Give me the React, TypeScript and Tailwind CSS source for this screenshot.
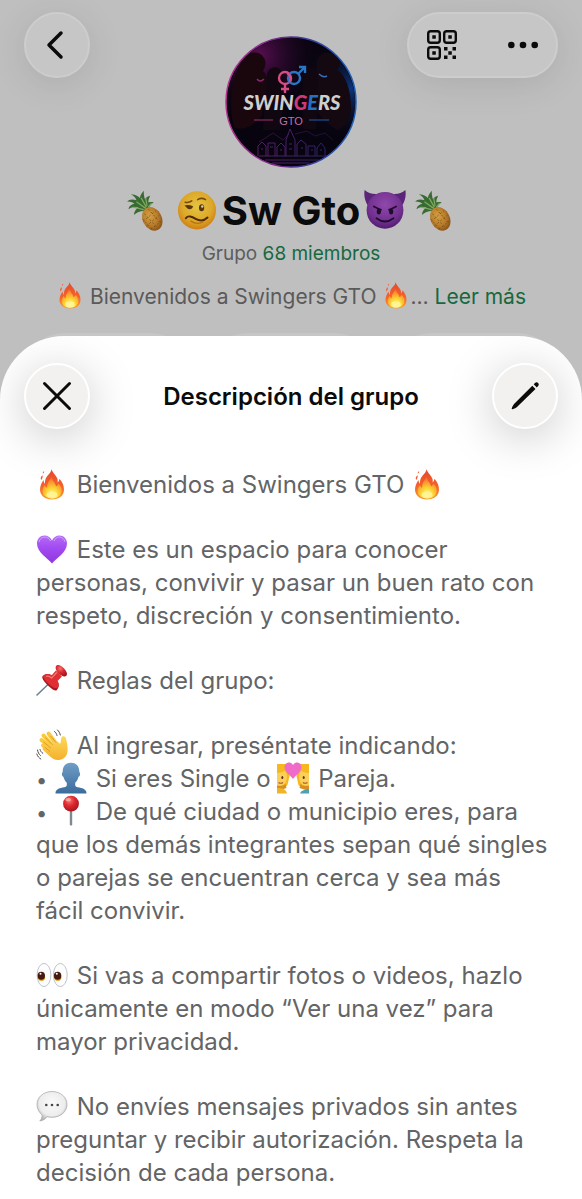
import React from 'react';

interface EmojiProps {
  label: string;
  className: string;
  children: React.ReactNode;
}

const Emoji: React.FC<EmojiProps> = ({ label, className, children }) => (
  <svg viewBox="0 0 32 32" role="img" aria-label={label} className={`inline-block shrink-0 ${className}`}>
    {children}
  </svg>
);

const inlineSize = 'w-8 h-8 -my-1 mr-0.5 align-[-3px]';
const titleSize = 'w-[42px] h-[42px]';
const subtitleSize = 'w-7 h-7 -my-1 align-[-1px]';

// Gradients shared by all the emoji drawings
const EmojiDefs = () => (
  <svg className="absolute w-0 h-0" aria-hidden="true">
    <defs>
      <linearGradient id="fireOuter" x1="0" y1="0" x2="0" y2="1">
        <stop offset="0" stopColor="#e5482d" />
        <stop offset="0.55" stopColor="#f4622b" />
        <stop offset="1" stopColor="#fb9a2c" />
      </linearGradient>
      <radialGradient id="fireInner" cx="0.5" cy="0.85" r="0.8">
        <stop offset="0" stopColor="#fff9b0" />
        <stop offset="0.4" stopColor="#fdd835" />
        <stop offset="1" stopColor="#f7702a" />
      </radialGradient>
      <linearGradient id="heart" x1="0" y1="0" x2="0" y2="1">
        <stop offset="0" stopColor="#b56cf5" />
        <stop offset="0.4" stopColor="#a44df2" />
        <stop offset="1" stopColor="#8f35e0" />
      </linearGradient>
      <radialGradient id="redBall" cx="0.4" cy="0.3" r="0.75">
        <stop offset="0" stopColor="#f7736f" />
        <stop offset="0.45" stopColor="#dc2a30" />
        <stop offset="1" stopColor="#a3131d" />
      </radialGradient>
      <linearGradient id="skin" x1="0" y1="0" x2="0" y2="1">
        <stop offset="0" stopColor="#fdd95a" />
        <stop offset="1" stopColor="#f4b02c" />
      </linearGradient>
      <linearGradient id="bust" x1="0" y1="0" x2="0" y2="1">
        <stop offset="0" stopColor="#6f9dc6" />
        <stop offset="1" stopColor="#3a6c9c" />
      </linearGradient>
      <radialGradient id="bubble" cx="0.5" cy="0.4" r="0.6">
        <stop offset="0" stopColor="#fafafa" />
        <stop offset="0.7" stopColor="#ededed" />
        <stop offset="1" stopColor="#b5b5b5" />
      </radialGradient>
      <radialGradient id="woozy" cx="0.5" cy="0.4" r="0.6">
        <stop offset="0" stopColor="#e3c540" />
        <stop offset="0.65" stopColor="#dda82a" />
        <stop offset="1" stopColor="#cf7f12" />
      </radialGradient>
      <radialGradient id="devil" cx="0.5" cy="0.35" r="0.65">
        <stop offset="0" stopColor="#8f49ab" />
        <stop offset="0.7" stopColor="#71308f" />
        <stop offset="1" stopColor="#531c72" />
      </radialGradient>
      <radialGradient id="pineapple" cx="0.45" cy="0.35" r="0.7">
        <stop offset="0" stopColor="#d3a044" />
        <stop offset="0.6" stopColor="#b67a2a" />
        <stop offset="1" stopColor="#7f4c14" />
      </radialGradient>
    </defs>
  </svg>
);

const Fire = ({ className = inlineSize }: { className?: string }) => (
  <Emoji label="fuego" className={className}>
    <path fill="url(#fireOuter)" d="M15.500 1c.6 3.600 5 6.500 6 10 .3 1 .4 2.300.1 3.500.9-.8 1.700-2 1.900-3.800 2.800 3.300 4.500 6.700 4.500 10.800 0 6.300-5 10-12 10S4 27.500 4 21.500c0-3.600 1.500-6.500 3.500-9.500.2 1.600.6 3 1.500 3.700C8.800 11 10.500 8.500 13 6c1.300-1.400 2.300-3 2.500-5z" />
    <path fill="#ee5a3a" d="M5.200 12c-1-1.600-.4-3.800 1.400-4.800.3 1.900-.2 3.400-1.400 4.800zM6.800 5.500c-.3-1 .4-2 1.400-2.300 0 1.100-.5 1.900-1.400 2.300z" />
    <path fill="url(#fireInner)" d="M15.800 9c.2 4 3.800 5.500 4.200 9.500 1-.4 2-1.500 2.500-2.700 2.200 2.400 3.500 4.700 3.200 7.400-.3 4.500-4 7.300-9.500 7.300s-9.400-2.600-9.700-6.900c-.1-2.400 1-4.700 2.400-6.600.4 1.300 1 2.200 2.200 2.700-.2-4.600 2.500-7.400 4.700-10.700z" />
    <ellipse cx="16" cy="26.800" rx="5.500" ry="3.600" fill="#fff59a" opacity="0.8" />
  </Emoji>
);

const PurpleHeart = () => (
  <Emoji label="corazón morado" className={inlineSize}>
    <path fill="url(#heart)" d="M16 30.500C12 25.500 1 19.500 1 10.500 1 5.800 4.300 2.500 8.500 2.500c3.400 0 6.200 2 7.500 5 1.300-3 4.100-5 7.500-5 4.200 0 7.500 3.300 7.500 8 0 9-11 15-15 20z" />
    <path d="M3 9c.6-3 3-5 5.600-5 2.600 0 4.800 1.500 6 4M18 8c1-2.500 3-4 5.400-4 2.600 0 4.800 2 5.500 4.600" fill="none" stroke="#d3a5fa" strokeWidth="1" />
  </Emoji>
);

const Pushpin = () => (
  <Emoji label="chincheta" className={inlineSize}>
    <path d="M13 19.500L1 31" stroke="#6e8193" strokeWidth="1.600" strokeLinecap="round" />
    <path fill="#a9171f" d="M6.500 12.300c3-3 6-3 9-1l5.500 5.500c2.600 3.500 2.300 6.500-.3 9.500-1.500 1-5-1.300-8.800-4.900-4-3.800-6.500-7.600-5.400-9.100z" />
    <path fill="#df2f35" d="M7 12c2.500-2.700 6-2.500 8.700-.8l4.200-4.700 6 6-4.300 4.500c1.600 2.500 1.500 5-.4 7.300-2 .4-5.400-1.500-8.700-4.600C9.200 16.500 6.900 13.800 7 12z" />
    <path fill="url(#redBall)" d="M20.500 1.600c1.900-1.300 5 .2 7.600 2.800 2.500 2.600 3.600 5.400 2.500 7-1.700 2-5 .8-7.900-1.900-2.800-2.800-4-6.100-2.200-7.900z" />
    <path d="M10 12.500c2-.8 4 0 5.700 1.500l5-5.500" fill="none" stroke="#f37b7b" strokeWidth="1.200" />
  </Emoji>
);

const WavingHand = () => (
  <Emoji label="mano saludando" className={inlineSize}>
    <g stroke="#f9c83c" strokeWidth="4" strokeLinecap="round" fill="none">
      <path d="M17 17L7.500 6.500" />
      <path d="M14.500 18.500L5.500 11" />
      <path d="M19.500 14L12.500 4.500" />
      <path d="M14 22L7 16.500" />
    </g>
    <path fill="url(#skin)" d="M11.500 16.500L20 11.500l4.200 3.200c.8-2 .6-4 1.300-6.200.6-1.800 3.600-1.600 4.300.6 1.200 3.800 2.200 9.500 1.700 13.400-.6 5-4 8.200-9 8.500-3.600.2-6-1.300-8.700-3.700l-6.500-6c-1.800-2 .4-4.300 2.400-3.300z" />
    <path d="M9.400 8.700l7.500 7.400M7.500 13l7.300 6M14.500 7l6 7M8.500 18l5.500 4.500" stroke="#d99320" strokeWidth="0.8" fill="none" />
    <path d="M18.500 2.500c1.500 1 2 2.200 2.500 4M21.500 1c1.600 1.500 2.300 3 2.800 5M1.500 21c.4 2.500 1.300 4 3 5.500M.8 25c.8 2.500 2.300 4 4 5M4 20.500c.4 1.500 1.300 2.800 2.800 3.800" fill="none" stroke="#4a4a4a" strokeWidth="1" strokeLinecap="round" />
  </Emoji>
);

const Bust = () => (
  <Emoji label="silueta" className={inlineSize}>
    <path fill="url(#bust)" d="M16 .8c4.900 0 8.300 3.400 8.300 8.700 0 1 .8 1 .8 2.600 0 1.800-.9 2.600-1.600 3-.7 2.700-2 4.500-3.300 5.700v2.400c0 1.200 1.500 1.700 4.300 2.400 4.200 1 7 2.200 7 5.900H.5c0-3.700 2.800-4.900 7-5.900 2.800-.7 4.300-1.200 4.300-2.400v-2.400c-1.300-1.200-2.600-3-3.300-5.700-.7-.4-1.600-1.200-1.600-3 0-1.600.8-1.600.8-2.600C7.700 4.200 11.100.8 16 .8z" />
  </Emoji>
);

const RoundPin = () => (
  <Emoji label="ubicación" className={inlineSize}>
    <path d="M14.800 14h2.400v15.500L16 31l-1.200-1.500z" fill="#82888f" />
    <circle cx="16" cy="8.700" r="7.900" fill="url(#redBall)" />
    <ellipse cx="13.200" cy="4.800" rx="2.800" ry="1.700" fill="#fbb4b1" opacity="0.8" />
  </Emoji>
);

const CoupleWithHeart = () => (
  <Emoji label="pareja con corazón" className={inlineSize}>
    <path fill="#f6b71f" d="M0 2h9c4 3 4.500 8 3.500 12l-2 9-3 3H0zM32 2h-9c-4 3-4.500 8-3.500 12l2 9 3 3H32z" />
    <path fill="#fbd05a" d="M0 11c4 0 6.500-1 8-2.500 2.500 4 2.500 8 .5 12-2 3-5 4-8.500 4zM32 11c-4 0-6.500-1-8-2.500-2.500 4-2.500 8-.5 12 2 3 5 4 8.500 4z" />
    <path fill="#d98e1f" d="M0 23.500c3 .8 6.500.3 8.500-1.500l1 4L0 29zM32 23.500c-3 .8-6.500.3-8.500-1.500l-1 4 9.500 3z" />
    <path fill="#efb42a" d="M0 26c5 0 9 1 10 5.500H0z" />
    <path fill="#4f9fb5" d="M32 27.500c-5 0-8 1-9 4h9z" />
    <g fill="#5b3412">
      <ellipse cx="5.300" cy="15.500" rx="1" ry="1.500" />
      <ellipse cx="26.700" cy="15.500" rx="1" ry="1.500" />
    </g>
    <path d="M1.500 20.500q2.500 1.500 4.500 0M30.500 20.500q-2.500 1.500-4.500 0" stroke="#b35535" strokeWidth="1.200" fill="none" />
    <path fill="#f06ac9" d="M16 17C14 13.500 7.500 10.500 7.500 5.300 7.500 2.300 9.600.5 12 .5c1.800 0 3.300 1 4 2.700C16.700 1.500 18.200.5 20 .5c2.400 0 4.500 1.800 4.500 4.800C24.500 10.500 18 13.500 16 17z" />
  </Emoji>
);

const Eyes = () => (
  <Emoji label="ojos" className={inlineSize}>
    <ellipse cx="8" cy="16" rx="6.900" ry="11.600" fill="#fdfdfd" stroke="#bfc3ca" strokeWidth="1" />
    <ellipse cx="24.300" cy="16" rx="6.900" ry="11.600" fill="#fdfdfd" stroke="#bfc3ca" strokeWidth="1" />
    <ellipse cx="5.500" cy="18.200" rx="3.600" ry="3.800" fill="#e5a32c" />
    <ellipse cx="21.800" cy="18.200" rx="3.600" ry="3.800" fill="#e5a32c" />
    <ellipse cx="5.300" cy="16.800" rx="3.700" ry="4" fill="#451a10" />
    <ellipse cx="21.600" cy="16.800" rx="3.700" ry="4" fill="#451a10" />
    <circle cx="4.500" cy="14.800" r="1" fill="#fff" />
    <circle cx="20.800" cy="14.800" r="1" fill="#fff" />
  </Emoji>
);

const SpeechBubble = () => (
  <Emoji label="globo de diálogo" className={inlineSize}>
    <path fill="url(#bubble)" stroke="#a3a3a3" strokeWidth="0.7" d="M16 1.500c8.500 0 15 5.700 15 12.900s-6.500 12.900-15 12.900c-2 0-3.500-.2-5-.6-1.500 2.300-4 3.800-7.200 4.300 1.700-1.700 2.400-3.700 2.200-6.200C2.900 22.400 1 18.600 1 14.400 1 7.200 7.500 1.500 16 1.500z" />
    <g fill="#454545">
      <circle cx="10.300" cy="15" r="1.300" />
      <circle cx="16" cy="15" r="1.300" />
      <circle cx="21.700" cy="15" r="1.300" />
    </g>
  </Emoji>
);

const Pineapple = () => (
  <Emoji label="piña" className={titleSize}>
    <path fill="#386b34" d="M14.500 16c-3-.3-6 .7-8.500 3 .3-2.500 1.500-4.500 3.500-5.600-3-.8-5.500-.2-7.500 1.300 0-2 1.800-3.600 4.500-4.200C4.800 9.200 2.800 8.700.8 8.800 2.500 7 5 6.700 8 7.800 7 5.500 5.500 4.200 3.600 3.500c2.700-.4 5 .5 7 2.600.3-2.200 1.300-4 3-5.600-.2 2.600.2 4.600.8 6.500 1-1.300 2.300-2.200 4-2.600-1 2-1.500 3.600-1.300 5.200 1.300-.5 2.600-.5 4 0-2.300 1.200-3.300 2.700-3.600 4.800z" />
    <path d="M15 14L8 9M15.500 13l-4-7M13.500 15l-8-2M16 12l-1-6M17 13l2.500-3" stroke="#7ea75c" strokeWidth="1" fill="none" />
    <ellipse cx="20" cy="22" rx="7.300" ry="9.400" transform="rotate(-28 20 22)" fill="url(#pineapple)" />
    <path d="M14 18l10 11M17 14.500L27 26M12.500 22l8 8.500M13 24l10-8.500M15.500 27.500l10-8.500M19 30l8-6.500" stroke="#7d5013" strokeWidth="0.6" strokeDasharray="1.500 1.500" fill="none" />
  </Emoji>
);

const WoozyFace = () => (
  <Emoji label="cara aturdida" className={titleSize}>
    <circle cx="16" cy="15.500" r="14.500" fill="url(#woozy)" />
    <path d="M6.500 11.800q3-.8 6.500.6-.5 2.300-3 2.200-1.500-.1-2-1.200z" fill="#5a350d" />
    <ellipse cx="19.500" cy="13.500" rx="2" ry="2.700" fill="#5a350d" />
    <circle cx="20" cy="12.600" r="0.9" fill="#d4cfc0" />
    <path d="M7 9.300q2.500.8 5-1M16.500 7.300q3-1.800 6 0" stroke="#7a480d" strokeWidth="1.200" fill="none" strokeLinecap="round" />
    <path d="M7.500 21.500c1.500-2.300 4.500-1.500 7.500.5 3.500 2 6.500 1.500 9-1" stroke="#4f2a06" strokeWidth="1.500" fill="none" strokeLinecap="round" />
    <path d="M11 23.500c3 2 7 2.500 10 .5" stroke="#b57316" strokeWidth="1" fill="none" />
  </Emoji>
);

const DevilFace = () => (
  <Emoji label="cara de diablo" className={titleSize}>
    <path fill="#5b2579" d="M.5 0C3 2.400 6 3.200 10 3L3 12C.7 8.500-.3 4 .5 0zM31.500 0C29 2.400 26 3.200 22 3l7 9c2.300-3.500 3.300-8 2.500-12z" />
    <circle cx="16" cy="15.500" r="14" fill="url(#devil)" />
    <ellipse cx="11.300" cy="16.400" rx="1.600" ry="2.200" fill="#210b30" />
    <ellipse cx="20.700" cy="16.400" rx="1.600" ry="2.200" fill="#210b30" />
    <path d="M7.500 12.500q2.500 1.300 5.500 2.500M24.500 12.500Q22 13.800 19 15M9.500 21.500q6.500 5 13 0" stroke="#210b30" strokeWidth="1.300" fill="none" strokeLinecap="round" />
  </Emoji>
);

const GroupAvatar = () => (
  <svg viewBox="0 0 132 132" role="img" aria-label="Swingers GTO" className="w-33 h-33">
    <defs>
      <linearGradient id="ring" x1="0" y1="0" x2="1" y2="0">
        <stop offset="0" stopColor="#b8328e" />
        <stop offset="0.45" stopColor="#6b2a8c" />
        <stop offset="0.6" stopColor="#3a3a9c" />
        <stop offset="1" stopColor="#1d62b8" />
      </linearGradient>
      <radialGradient id="glowPink" cx="0.25" cy="0.15" r="0.5">
        <stop offset="0" stopColor="#5b0f55" />
        <stop offset="1" stopColor="#08040f" stopOpacity="0" />
      </radialGradient>
      <radialGradient id="glowBlue" cx="0.95" cy="0.4" r="0.4">
        <stop offset="0" stopColor="#0c357c" />
        <stop offset="1" stopColor="#08040f" stopOpacity="0" />
      </radialGradient>
      <linearGradient id="town" x1="0" y1="0" x2="1" y2="0">
        <stop offset="0" stopColor="#7a2a86" />
        <stop offset="1" stopColor="#3c2d8c" />
      </linearGradient>
      <clipPath id="disc"><circle cx="66" cy="66" r="64" /></clipPath>
    </defs>
    <circle cx="66" cy="66" r="65" fill="#08040f" />
    <g clipPath="url(#disc)">
      <rect width="132" height="132" fill="url(#glowPink)" />
      <rect width="132" height="132" fill="url(#glowBlue)" />
      {/* Silhouettes */}
      <path fill="#19070d" d="M18 24c4-9 17-10 21-2 3 5 1 9-1 13 5 4 4 12 2 18l-3 26c-8 12-20 16-28 12C3 70 6 42 18 24z" />
      <path fill="#140910" d="M92 24c3-9 15-10 20-3 4 6 2 10 0 13 9 5 14 20 14 38 0 10-6 20-14 22-10-8-22-14-22-30l2-24c-1-6-1-11 0-16z" />
      <path fill="#110711" d="M42 38c2-8 12-9 15-2 3 8 0 14 2 24l-4 34H38zM77 38c2-8 12-8 15-1 2 9-1 12 1 24l-2 32H78z" />
      <path fill="none" stroke="#8b2770" strokeWidth="1.500" d="M32 43q3 4 7 0" />
      <path fill="none" stroke="#386cb8" strokeWidth="1.500" d="M94 38q4 4 8 2" />
    </g>
    <circle cx="66" cy="66" r="65" fill="none" stroke="url(#ring)" strokeWidth="1.500" />
    {/* Linked gender signs */}
    <g fill="none" strokeWidth="2.400">
      <circle cx="60" cy="42" r="6" stroke="#d84c84" />
      <path d="M60 48v9M56 53h8" stroke="#d84c84" />
      <circle cx="69" cy="42" r="6" stroke="#2777c8" />
      <path d="M73 38l6-6M74 31h6v6" stroke="#2777c8" />
      <path d="M62 37q5 3 3 9" stroke="#d84c84" />
    </g>
    <text x="67" y="74" textAnchor="middle" fontFamily="Lato, sans-serif" fontSize="20" fontStyle="italic" fontWeight="900" fill="#cfcfcf">
      SWIN<tspan fill="#cf3978">G</tspan><tspan fill="#2670c4">E</tspan>RS
    </text>
    <text x="66" y="89" textAnchor="middle" fontFamily="Liberation Sans, sans-serif" fontSize="11" fill="#c46fa5">GTO</text>
    <path d="M29 84h19" stroke="#a13270" />
    <path d="M84 84h20" stroke="#245ca5" />
    <g fill="none" stroke="url(#town)" strokeWidth="1" opacity="0.7">
      <path d="M34 106l14-9 10 7 6-6M70 98l12-3 8 5 10-3 8 7" strokeWidth="0.5" />
      <path d="M33 120v-10l4-4 4 4v10M43 120v-13h7v13M52 120v-9l4-4 4 4v9M61 120v-16l4-11 5 11v16M72 120v-12l4-4 5 4v12M83 120v-10h7v10M92 120v-8l4-5 4 5v8" />
      <path d="M36 113h2M45 111h3M55 114h2M64 108h3M64 113h3M76 112h2M86 114h2M95 114h2M34 120h68M40 124h54M47 127h38" />
    </g>
  </svg>
);

const QrIcon = () => (
  <svg viewBox="0 0 30 30" className="w-[30px] h-[30px]" aria-hidden="true">
    <g fill="none" stroke="#0b0b0b" strokeWidth="2.400">
      <rect x="1.200" y="1.200" width="11.600" height="11.600" rx="2.500" />
      <rect x="17.200" y="1.200" width="11.600" height="11.600" rx="2.500" />
      <rect x="1.200" y="17.200" width="11.600" height="11.600" rx="2.500" />
    </g>
    <path fill="#0b0b0b" d="M5.300 5.300h3.500v3.500H5.300zM21.300 5.300h3.500v3.500h-3.500zM5.300 21.300h3.500v3.500H5.300zM17 17h3.500v3.500H17zM25.500 17H29v3.500h-3.500zM21.300 21.300h3.500v3.500h-3.500zM17 25.500h3.500V29H17zM25.500 25.500H29V29h-3.500z" />
  </svg>
);

const Bullet = () => <span className="mr-0.5 text-xl leading-6">• </span>;

const App: React.FC = () => {
  return (
    <div className="relative flow-root min-h-screen overflow-hidden bg-[#bfbfbf] font-[Inter,'Liberation_Sans',sans-serif] text-[#0b0b0b]">
      <EmojiDefs />

      {/* Group info behind the sheet */}
      <header className="grid grid-cols-[1fr_auto_1fr] items-start px-6 pt-3">
        <button
          aria-label="Atrás"
          className="flex items-center justify-center w-[66px] h-[66px] rounded-full bg-[#c6c6c6] border-2 border-[#cdcdcd] shadow-[0_6px_36px_rgba(0,0,0,0.1)]"
        >
          <svg viewBox="0 0 18 30" className="w-[18px] h-[30px] mr-1" fill="none" stroke="currentColor" strokeWidth="3.500" strokeLinecap="round" strokeLinejoin="round">
            <path d="M15 3L3 15l12 12" />
          </svg>
        </button>
        <div className="pt-6">
          <GroupAvatar />
        </div>
        <div className="justify-self-end flex items-center justify-between w-[151px] h-[66px] px-[18px] rounded-full bg-[#c6c6c6] border-2 border-[#cdcdcd] shadow-[0_6px_36px_rgba(0,0,0,0.1)]">
          <button aria-label="Código QR"><QrIcon /></button>
          <button aria-label="Más opciones">
            <svg viewBox="0 0 30 8" className="w-[30px] h-2" fill="currentColor">
              <circle cx="3.300" cy="4" r="3.300" />
              <circle cx="15" cy="4" r="3.300" />
              <circle cx="26.700" cy="4" r="3.300" />
            </svg>
          </button>
        </div>
      </header>

      <section className="flex flex-col items-center whitespace-nowrap">
        <h1 className="flex items-center justify-center mt-[19px] h-12 text-[40px] leading-12 font-bold">
          <Pineapple />
          <span className="w-2" />
          <WoozyFace />
          <span className="px-1">Sw Gto</span>
          <DevilFace />
          <span className="w-2" />
          <Pineapple />
        </h1>
        <p className="mt-[5px] text-[19px] leading-7 text-[#5d5d5d]">
          Grupo <a href="#miembros" className="text-[#16693f]">68 miembros</a>
        </p>
        <p className="mt-[13px] text-[21px] leading-8 text-[#5a5a5a]">
          <Fire className={subtitleSize} /> Bienvenidos a Swingers GTO <Fire className={subtitleSize} />…{' '}
          <a href="#descripcion" className="text-[#16693f]">Leer más</a>
        </p>
      </section>

      <div className="grid grid-cols-3 gap-4 mt-5 px-6">
        <div className="h-20 rounded-[40px] bg-[#c6c6c6]" />
        <div className="h-20 rounded-[40px] bg-[#c6c6c6]" />
        <div className="h-20 rounded-[40px] bg-[#c6c6c6]" />
      </div>

      {/* Description sheet */}
      <main className="relative -mt-[77px] min-h-[863px] overflow-hidden rounded-t-[64px] bg-white pb-2">
        <div className="flex items-center justify-between px-6 pt-[27px]">
          <button
            aria-label="Cerrar"
            className="flex items-center justify-center w-[66px] h-[66px] rounded-full bg-[#f3f1f0] border-2 border-white shadow-[0_8px_48px_rgba(0,0,0,0.22)]"
          >
            <svg viewBox="0 0 30 30" className="w-[30px] h-[30px]" fill="none" stroke="currentColor" strokeWidth="3" strokeLinecap="round">
              <path d="M2.500 2.500l25 25M27.500 2.500l-25 25" />
            </svg>
          </button>
          <h2 className="pt-0.5 text-[24px] leading-8 font-semibold">Descripción del grupo</h2>
          <button
            aria-label="Editar"
            className="flex items-center justify-center w-[66px] h-[66px] rounded-full bg-[#f3f1f0] border-2 border-white shadow-[0_8px_48px_rgba(0,0,0,0.22)]"
          >
            <svg viewBox="0 0 30 30" className="w-[30px] h-[30px]" fill="currentColor">
              <path d="M22.300 4.700l3.200 3.200L7.500 25.600c-1.400 1.300-3.200 2.300-5 2.700-.6.100-.9-.3-.8-.8.500-1.800 1.400-3.700 2.800-5.100zM23.700 3.300l1.300-1.300c1-.9 2.300-.8 3.100 0 .9.900.9 2.200 0 3.100l-1.300 1.400z" />
            </svg>
          </button>
        </div>

        <div className="relative mt-[39px] px-9 space-y-8 text-[24px] leading-[33px] text-[#636466] whitespace-nowrap">
          <p><Fire /> Bienvenidos a Swingers GTO <Fire /></p>
          <p>
            <PurpleHeart /> Este es un espacio para conocer<br />
            personas, convivir y pasar un buen rato con<br />
            respeto, discreción y consentimiento.
          </p>
          <p><Pushpin /> Reglas del grupo:</p>
          <div>
            <p><WavingHand /> Al ingresar, preséntate indicando:</p>
            <ul>
              <li><Bullet /> <Bust /> Si eres Single o <CoupleWithHeart /> Pareja.</li>
              <li>
                <Bullet /> <RoundPin /> De qué ciudad o municipio eres, para<br />
                que los demás integrantes sepan qué singles<br />
                o parejas se encuentran cerca y sea más<br />
                fácil convivir.
              </li>
            </ul>
          </div>
          <p>
            <Eyes /> Si vas a compartir fotos o videos, hazlo<br />
            únicamente en modo “Ver una vez” para<br />
            mayor privacidad.
          </p>
          <p>
            <SpeechBubble /> No envíes mensajes privados sin antes<br />
            preguntar y recibir autorización. Respeta la<br />
            decisión de cada persona.
          </p>
        </div>
      </main>
    </div>
  );
};

export default App;
